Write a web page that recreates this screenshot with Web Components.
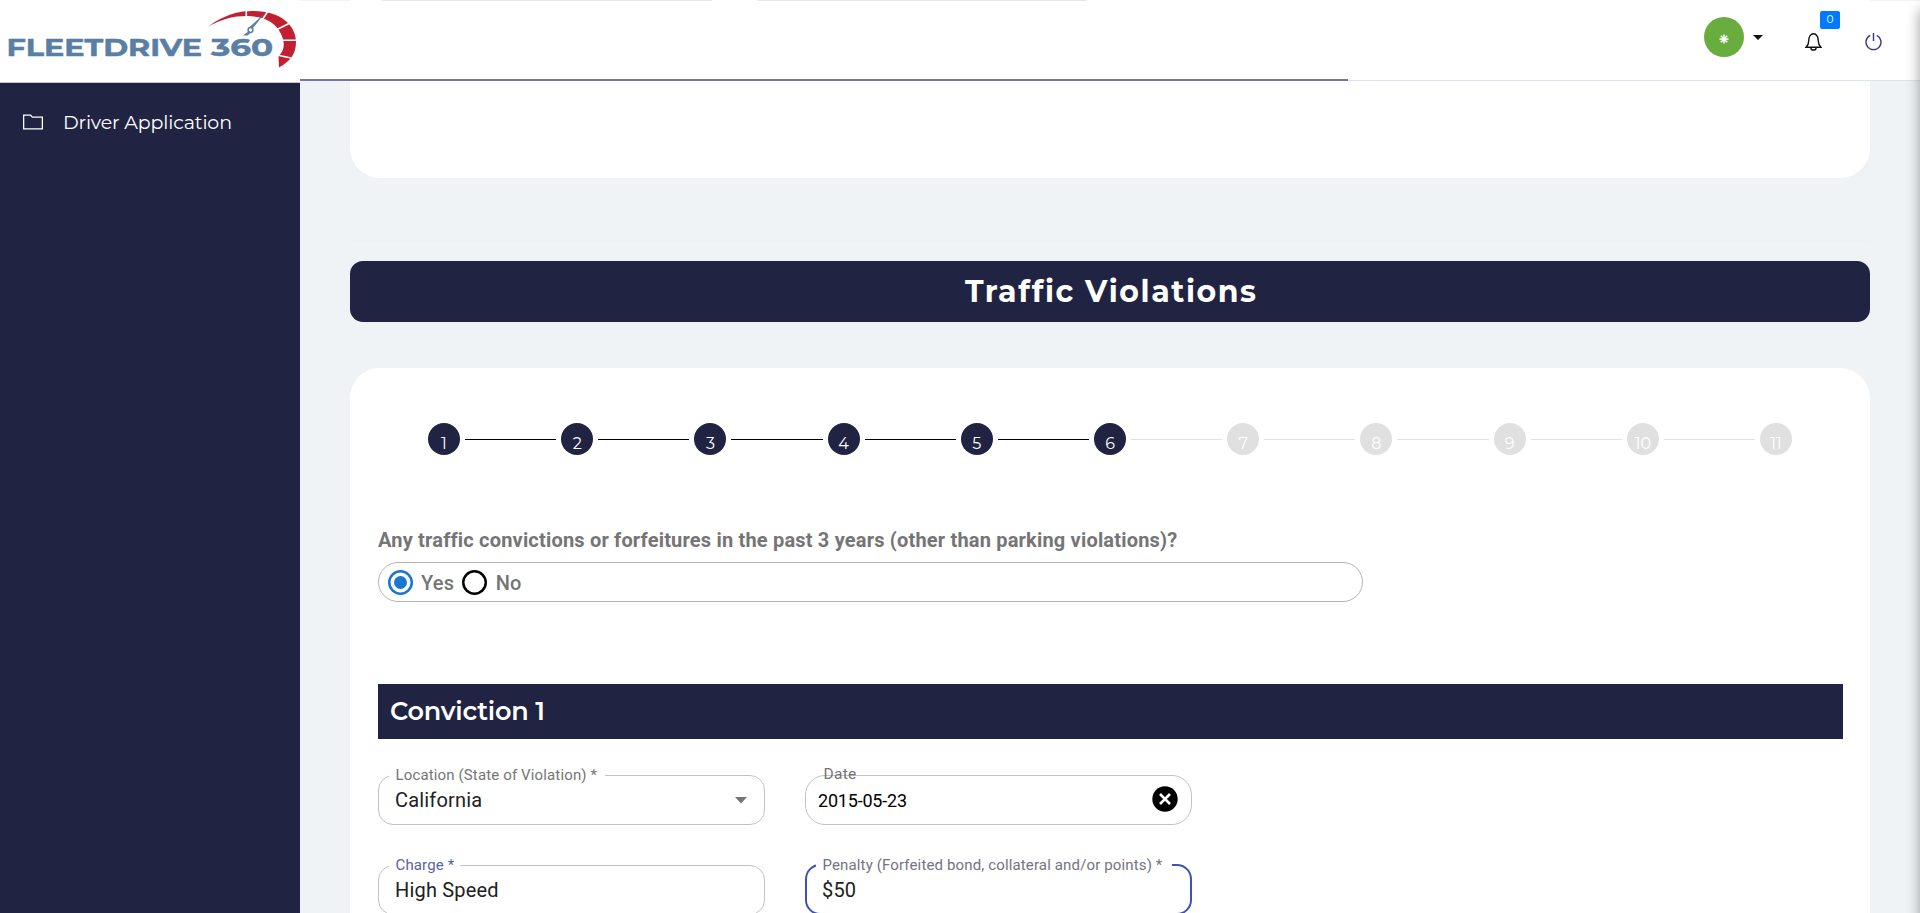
<!DOCTYPE html>
<html lang="en">
<head>
<meta charset="utf-8">
<title>FleetDrive 360 - Driver Application</title>
<style>
html,body{margin:0;height:100%;overflow:hidden}
body{font-family:Roboto,"Noto Sans",sans-serif;background:#eff3f6}
</style>
</head>
<body>
<fd-app></fd-app>
<script>
const define = (name, html, setup) => customElements.define(name, class extends HTMLElement {
  connectedCallback() {
    if (this.shadowRoot) return;
    const root = this.attachShadow({ mode: 'open' });
    const t = document.createElement('template');
    t.innerHTML = html;
    root.append(t.content.cloneNode(true));
    if (setup) setup(this, root);
  }
});

/* Text set to a fixed width in the brand typeface */
define('fd-label', `<style>:host{display:block;line-height:0}svg{display:block;overflow:visible}text{font-variant-ligatures:none}</style><svg><text></text></svg>`, (el, root) => {
  const svg = root.querySelector('svg'), t = root.querySelector('text');
  const w = el.getAttribute('w'), s = +el.getAttribute('size');
  svg.setAttribute('width', w); svg.setAttribute('height', s);
  t.setAttribute('y', s);
  t.setAttribute('textLength', w);
  t.setAttribute('lengthAdjust', 'spacing');
  t.setAttribute('font-size', s);
  t.setAttribute('font-weight', el.getAttribute('weight') || 400);
  t.setAttribute('fill', 'currentColor');
  t.setAttribute('font-family', 'Montserrat, Inter, sans-serif');
  t.textContent = el.getAttribute('text');
});

define('fd-logo', `<style>:host{display:block;height:82px;background:#fff;border-bottom:1px solid #c8c9d0}svg{display:block}</style>
<svg width="300" height="82" viewBox="0 0 300 82">
<g font-family="Montserrat,Inter,sans-serif" font-weight="700" font-size="23.500" fill="#5a7fa5" stroke="#5a7fa5" stroke-width=".5" stroke-linejoin="round">
<text x="6.500" y="55.500" textLength="195.500" lengthAdjust="spacingAndGlyphs">FLEETDRIVE</text>
<text x="211" y="55.500" textLength="62" lengthAdjust="spacingAndGlyphs">360</text></g>
<path d="M208 26.500C227 13.500 239 11 254 11C280 11 296 25 296 42C296 53 291 61 279 67.500L278.500 56C285 50 285 42 281 34C276 22 263 16 247 16C233 16 222 19 208 26.500Z" fill="#c21f30"/>
<path d="M246.300 9V19M268 11L259 25M290 23L276 30M297 40.300H280M291 58L277 55" stroke="#fff" stroke-width="1.600" fill="none"/>
<path d="M265 13L252.500 28.500L249.500 27Z" fill="#5a7fa5"/><circle cx="250.500" cy="30" r="2.400" fill="#fff" stroke="#5a7fa5" stroke-width="1.500"/><path d="M249 31L243 35.500H247.500L251 32.500Z" fill="#5a7fa5"/>
</svg>`);

define('fd-sidebar', `<style>:host{display:flex;flex-direction:column;background:#212343;color:#fff}
nav{display:flex;align-items:center;padding:24px 23px;gap:19.500px;height:30px}
svg{display:block;flex:none}fd-label{margin-top:-6px}</style>
<fd-logo></fd-logo>
<nav><svg width="20" height="16" viewBox="0 0 20 16" fill="none" stroke="#fff" stroke-width="1.300"><path d="M.65 1.150H7.600L9.300 3.150H19.350V14.850H.65Z"/></svg>
<fd-label text="Driver Application" w="169" size="19"></fd-label></nav>`);

define('fd-topbar', `<style>
:host{display:block;height:81px;background:#fff;position:relative;box-sizing:border-box;border-bottom:1px solid #dce4ec}
.tools{display:flex;height:80px;align-items:flex-start;box-sizing:border-box;padding-left:1404px}
.avatar{width:40px;height:40px;border-radius:50%;background:#69ad3f;margin-top:17px;display:grid;place-items:center;color:#fff}
.caret{margin:35px 0 0 9px}.bell{margin:33px 0 0 42px}.power{margin:33px 0 0 43px}
svg{display:block}
.badge{position:absolute;left:1520px;top:11px;width:20px;height:18px;border-radius:2px;background:#007bff;color:#fff;font:10.500px/18px Montserrat,Inter,sans-serif;text-align:center}
.progress{position:absolute;left:0;top:79px;width:1048px;height:2px;background:#7772a7}
.strip{position:absolute;left:0;right:0;top:0;height:1px;display:flex}
.strip i{height:1px;background:#e5e9ed}
</style>
<div class="strip"><i style="width:50px;background:#eff3f6"></i><i style="width:330px;margin-left:32px"></i><i style="width:330px;margin-left:45px"></i><i style="width:50px;margin-left:auto;background:#eff3f6"></i></div>
<div class="tools">
<div class="avatar"><svg width="10" height="10" viewBox="-5 -5 10 10" stroke="#fff" stroke-width="1.500" style="margin-top:3px;margin-right:1px"><path d="M0-4.500V4.500M-4.500 0H4.500M-3.200-3.200L3.200 3.200M3.200-3.200L-3.200 3.200"/></svg></div>
<svg class="caret" width="10" height="5"><path d="M0 0H10L5 5Z" fill="#111"/></svg>
<svg class="bell" width="17" height="18" viewBox="0 0 17 18" fill="none" stroke="#111" stroke-width="1.400"><path d="M1 14.300H16C14 12.500 13.300 11.500 13.300 8C13.300 4 11.500.800 8.500.800S3.700 4 3.700 8C3.700 11.500 3 12.500 1 14.300ZM5.800 14.800C6.200 17.800 10.800 17.800 11.200 14.800"/></svg>
<svg class="power" width="17" height="18" viewBox="0 0 17 18" fill="none" stroke="#35357f" stroke-width="1.400"><path d="M8.500 0V8M5.200 2.400A7.500 7.500 0 1 0 11.800 2.400"/></svg>
</div><span class="badge">0</span><div class="progress"></div>`);

define('fd-step', `<style>:host{display:flex;align-items:center;--c:#e0e0e0;flex:1}
:host([last]){flex:none}:host([last]) i{display:none}
:host([done]){--c:#212343}
b{width:32px;height:32px;border-radius:50%;background:var(--c);color:#fff;flex:none;font:400 16px/41px Montserrat,Inter,sans-serif;text-align:center}
i{flex:1;height:1px;margin:0 5px;background:#e0e0e0}:host([line]) i{background:#000}</style><b><slot></slot></b><i></i>`);

define('fd-stepper', `<style>:host{display:flex;height:32px;margin:0 51px 0 50px}</style>`, (el, root) => {
  for (let n = 1; n <= 11; n++) {
    const s = document.createElement('fd-step');
    s.textContent = n;
    if (n <= 6) s.setAttribute('done', '');
    if (n <= 5) s.setAttribute('line', '');
    if (n === 11) s.setAttribute('last', '');
    root.append(s);
  }
});

define('fd-radio', `<style>:host{display:flex;align-items:center;font-weight:500;font-size:20px;color:#757575;gap:8.500px}
b{width:25px;height:25px;border-radius:50%;display:grid;place-items:center;box-shadow:inset 0 0 0 2.500px #000}
:host([checked]) b{box-shadow:inset 0 0 0 2.500px #1976d2}:host([checked]) b::after{content:"";width:13px;height:13px;border-radius:50%;background:#1976d2}</style><b></b><slot></slot>`);

define('fd-question', `<style>:host{display:block;color:#757575;letter-spacing:.1875px}
p{margin:0;font-weight:700;font-size:20px;line-height:24px;white-space:nowrap;width:max-content}
.group{display:flex;align-items:center;width:985px;height:40px;margin-top:10px;box-sizing:border-box;border:1px solid #b5b5b5;border-radius:20px;padding:1px 8.500px 0;gap:8px}</style>
<p><slot name="q"></slot></p><div class="group"><slot></slot></div>`);

/* Outlined field: the fieldset legend opens the notch in the border */
define('fd-field', `<style>
:host{display:block;position:relative;height:50px;--b:#c2c2c2}
fieldset{position:absolute;inset:-8px 0 0;margin:0;padding:0 10px;border:1px solid var(--b);border-radius:var(--r,15px);min-width:0}
:host([focused]){--b:#3f51b5}:host([focused]) fieldset{border-width:2px;padding:0 9px}
legend{font-size:15px;line-height:16px;height:16px;padding:0 var(--pr,6px) 0 6.500px;color:var(--lc,#757575);white-space:nowrap;letter-spacing:.14px}
.v{position:relative;display:flex;align-items:center;justify-content:space-between;height:50px;padding:0 18px 0 17px;font-size:20px;letter-spacing:.1875px;color:#212121}
:host([plain]) .v{font-size:18px;letter-spacing:-.2px;color:#000;padding:0 14px 0 13px}
:host([plain]){--r:20px}
:host([plain]) legend{display:none}:host([plain]) fieldset{inset:0}
.over{display:none}:host([plain]) .over{display:block;position:absolute;left:18.500px;top:-10px;font-size:15.500px;letter-spacing:.3px;line-height:18px;color:#757575}
</style><fieldset><legend></legend></fieldset><span class="over"></span><div class="v"><span></span><slot></slot></div>`, (el, root) => {
  const l = el.getAttribute('label');
  if (el.hasAttribute('plain')) root.querySelector('.over').textContent = l;
  else root.querySelector('legend').textContent = l;
  root.querySelector('.v span').textContent = el.getAttribute('value');
});

define('fd-content', `<style>
:host{display:block;padding:0 50px;background:#eff3f6}
.prev{height:97px;background:#fff;border-radius:0 0 30px 30px}
hr{border:0;height:1px;margin:62px 0 20px;background:#edf0f5}
.banner{height:61px;border-radius:13px;background:#212343;color:#fff;display:flex;justify-content:center;align-items:flex-start}
.banner fd-label{margin-top:11px}
.card{margin-top:46px;height:600px;background:#fff;border-radius:30px 30px 0 0;padding:55px 27px 0 28px}
fd-question{margin-top:73px}
.head{height:55px;margin-top:82px;background:#212343;color:#fff;padding-left:11.500px;display:flex;align-items:flex-start}
.head fd-label{margin-top:9.500px}
.grid{display:grid;grid-template-columns:387px 387px;column-gap:40px;row-gap:40px;margin-top:36px}
svg{display:block}
</style>
<div class="prev"></div><hr>
<div class="banner"><fd-label text="Traffic Violations" w="291" size="30" weight="700"></fd-label></div>
<div class="card"><fd-stepper></fd-stepper>
<fd-question><span slot="q">Any traffic convictions or forfeitures in the past 3 years (other than parking violations)?</span><fd-radio checked>Yes</fd-radio><fd-radio>No</fd-radio></fd-question>
<div class="head"><fd-label text="Conviction 1" w="155" size="25.500" weight="600"></fd-label></div>
<div class="grid">
<fd-field label="Location (State of Violation) *" value="California" style="--pr:7.500px"><svg width="12" height="7"><path d="M0 0H12L6 6.500Z" fill="#757575"/></svg></fd-field>
<fd-field plain label="Date" value="2015-05-23"><svg width="26" height="26" viewBox="0 0 26 26" style="margin-top:-3px"><circle cx="13" cy="13" r="12.700"/><path d="M8 8L18 18M18 8L8 18" stroke="#fff" stroke-width="2.600"/></svg></fd-field>
<fd-field label="Charge *" value="High Speed" style="--lc:#58639f"></fd-field>
<fd-field focused label="Penalty (Forfeited bond, collateral and/or points) *" value="$50" style="--lc:#73747f;--pr:10px"></fd-field>
</div></div>`);

define('fd-app', `<style>
:host{display:grid;grid-template-columns:300px 1620px;grid-template-rows:81px 832px;width:1920px;height:913px;overflow:hidden;position:relative}
fd-sidebar{grid-row:1/3}
.shade{position:absolute;left:1920px;top:10px;bottom:-10px;width:20px;box-shadow:0 0 14px rgba(0,0,0,.38)}
</style><fd-sidebar></fd-sidebar><fd-topbar></fd-topbar><fd-content></fd-content><div class="shade"></div>`);
</script>
</body>
</html>
